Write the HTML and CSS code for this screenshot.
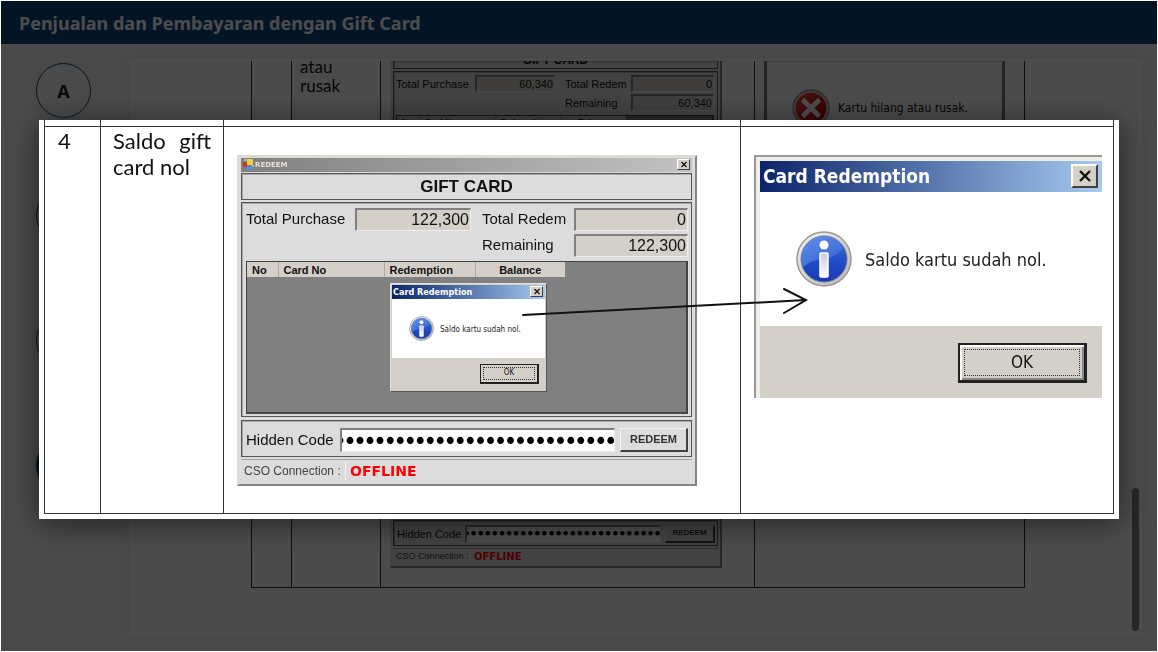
FILE: index.html
```html
<!DOCTYPE html>
<html lang="id">
<head>
<meta charset="utf-8">
<title>Penjualan dan Pembayaran dengan Gift Card</title>
<link rel="stylesheet" href="styles.css">
</head>
<body>
<svg class="defs" width="0" height="0" aria-hidden="true">
  <defs>
    <linearGradient id="ring" x1="0" y1="0" x2="1" y2="1"><stop offset="0" stop-color="#f4f4f4"/><stop offset="1" stop-color="#b4b4b0"/></linearGradient>
    <linearGradient id="blue" x1="0" y1="0" x2="0" y2="1"><stop offset="0" stop-color="#3f74dc"/><stop offset=".5" stop-color="#2350c8"/><stop offset="1" stop-color="#1838b4"/></linearGradient>
    <linearGradient id="gloss" x1="0" y1="0" x2="1" y2="1"><stop offset="0" stop-color="#6f9cf0"/><stop offset="1" stop-color="#3564d2"/></linearGradient>
    <linearGradient id="stem" x1="0" y1="0" x2="0" y2="1"><stop offset="0" stop-color="#c8ccd4"/><stop offset="1" stop-color="#ffffff"/></linearGradient>
    <linearGradient id="red" x1="0" y1="0" x2="1" y2="1"><stop offset="0" stop-color="#ee5040"/><stop offset=".5" stop-color="#d81818"/><stop offset="1" stop-color="#a80000"/></linearGradient>
    <symbol id="info" viewBox="0 0 56 56">
      <circle cx="28" cy="28" r="27" fill="url(#ring)" stroke="#9a9a98" stroke-width="1.5"/>
      <circle cx="28" cy="28" r="23" fill="url(#blue)" stroke="#6e7690" stroke-width="1"/>
      <path d="M6 32A22 22 0 0 1 47 17Q40 27 26 28Q14 29 6 37Z" fill="url(#gloss)" opacity=".75"/>
      <circle cx="28" cy="14" r="4.5" fill="#fff"/>
      <rect x="24" y="22" width="8" height="24" rx="1" fill="url(#stem)" stroke="#fff" stroke-width="1.5"/>
    </symbol>
    <symbol id="error" viewBox="0 0 56 56">
      <circle cx="28" cy="28" r="26" fill="#f4f4f4" stroke="#9a9a98" stroke-width="3"/>
      <circle cx="28" cy="28" r="23" fill="url(#red)"/>
      <path d="M18 18L38 38M38 18L18 38" stroke="#fff" stroke-width="7" stroke-linecap="square"/>
    </symbol>
    <symbol id="close" viewBox="0 0 16 14"><path d="M3 2L13 12M13 2L3 12" stroke="#111" stroke-width="2.4" fill="none"/></symbol>
  </defs>
</svg>

<div class="app">
  <header class="topbar"><h1>Penjualan dan Pembayaran dengan Gift Card</h1></header>
  <div class="workspace">
    <nav class="steps">
      <a class="step" href="#a">A</a>
      <a class="step" href="#b">B</a>
      <a class="step" href="#c">C</a>
      <a class="step step-active" href="#d">D</a>
    </nav>
    <main class="card">
      <table class="cases cases-page">
        <colgroup><col class="p-no"><col class="p-case"><col class="p-shot"><col></colgroup>
        <tbody>
        <tr class="page-first">
          <td></td>
          <td class="case-name"><div>atau<br>rusak</div></td>
          <td class="page-shot">
            <div class="redeem small cut-top">
              <div class="panel banner">GIFT CARD</div>
              <div class="panel totals-panel">
                <div class="totals">
                  <label for="p-buy">Total Purchase</label><input id="p-buy" value="60,340" readonly>
                  <label for="p-red">Total Redem</label><input id="p-red" value="0" readonly>
                  <label class="third" for="p-rem">Remaining</label><input id="p-rem" value="60,340" readonly>
                </div>
                <div class="list"><table><thead><tr><th class="no">No</th><th class="cn">Card No</th><th class="rd">Redemption</th><th class="bl">Balance</th></tr></thead></table></div>
              </div>
            </div>
          </td>
          <td class="page-dialog">
            <div class="message-frame"><svg class="error-icon"><use href="#error"/></svg><span>Kartu hilang atau rusak.</span></div>
          </td>
        </tr>
        <tr class="page-second">
          <td></td><td></td>
          <td class="page-shot">
            <div class="redeem small">
              <div class="panel code-panel">
                <label for="p-code">Hidden Code</label>
                <input id="p-code" type="password" value="1234567890123456789012345678" readonly>
                <button type="button">REDEEM</button>
              </div>
              <div class="status"><span class="conn">CSO Connection :</span><strong>OFFLINE</strong></div>
            </div>
          </td>
          <td></td>
        </tr>
        </tbody>
      </table>
      <div class="scroll-thumb"></div>
    </main>
  </div>
</div>

<div class="backdrop">
  <section class="lightbox" role="dialog" aria-label="Saldo gift card nol">
    <table class="cases cases-zoom">
      <colgroup><col class="z-no"><col class="z-case"><col class="z-shot"><col></colgroup>
      <tbody>
      <tr class="stub"><td></td><td></td><td></td><td></td></tr>
      <tr class="zoom-row">
        <td>4</td>
        <td class="case-text">Saldo gift card nol</td>
        <td class="zoom-shot">
          <div class="redeem">
            <div class="titlebar">
              <svg class="app-icon" viewBox="0 0 11 11"><rect x="4" y="0" width="6" height="6" rx="1" fill="#f5cf45"/><rect x="0" y="3" width="4" height="5" rx="1" fill="#cf3526"/><rect x="4" y="7" width="5" height="4" rx="1" fill="#4a8cea"/><path d="M1 1h3M9 7h2" stroke="#eee"/></svg>
              <span>REDEEM</span>
              <button type="button" class="close" aria-label="Tutup"><svg><use href="#close"/></svg></button>
            </div>
            <div class="panel banner">GIFT CARD</div>
            <div class="panel totals-panel">
              <div class="totals">
                <label for="buy">Total Purchase</label><input id="buy" value="122,300" readonly>
                <label for="red">Total Redem</label><input id="red" value="0" readonly>
                <label class="third" for="rem">Remaining</label><input id="rem" value="122,300" readonly>
              </div>
              <div class="list">
                <table><thead><tr><th class="no">No</th><th class="cn">Card No</th><th class="rd">Redemption</th><th class="bl">Balance</th></tr></thead></table>
                <div class="msgbox msgbox-small">
                  <div class="msg-title"><span>Card Redemption</span><button type="button" class="close" aria-label="Tutup pesan"><svg><use href="#close"/></svg></button></div>
                  <div class="msg-body"><svg><use href="#info"/></svg><span>Saldo kartu sudah nol.</span></div>
                  <div class="msg-foot"><button type="button" class="ok"><span>OK</span></button></div>
                </div>
              </div>
            </div>
            <div class="panel code-panel">
              <label for="code">Hidden Code</label>
              <input id="code" type="password" value="1234567890123456789012345678" readonly>
              <button type="button">REDEEM</button>
            </div>
            <div class="status"><span class="conn">CSO Connection :</span><strong>OFFLINE</strong></div>
          </div>
        </td>
        <td class="zoom-dialog">
          <div class="msgbox msgbox-large">
            <div class="msg-title"><span>Card Redemption</span><button type="button" class="close" aria-label="Tutup dialog"><svg><use href="#close"/></svg></button></div>
            <div class="msg-body"><svg><use href="#info"/></svg><span>Saldo kartu sudah nol.</span></div>
            <div class="msg-foot"><button type="button" class="ok"><span>OK</span></button></div>
          </div>
        </td>
      </tr>
      </tbody>
    </table>
    <svg class="arrow" viewBox="0 0 290 30" aria-hidden="true"><path d="M2 20L285 5M263 -6L285 5L263 18" fill="none" stroke="#111" stroke-width="2" stroke-linecap="round"/></svg>
  </section>
</div>
</body>
</html>
```

FILE: styles.css
```css
* { box-sizing: border-box; }
html, body { height: 100%; }
body {
  margin: 0;
  padding: 1px;
  background: #fff;
  color: #111;
  font-family: "Liberation Sans", Arial, sans-serif;
  overflow: hidden;
}
button, input { font: inherit; color: inherit; margin: 0; padding: 0; border-radius: 0; outline: 0; }
.defs { position: absolute; }

/* page */
.app { height: 100%; display: flex; flex-direction: column; background: #f7f7f7; }
.topbar { flex: none; height: 43px; padding-left: 18px; display: flex; align-items: center; background: #0a4678; }
.topbar h1 { margin: 0; color: #fff; font: bold 18px/24px "Noto Sans", sans-serif; }
.workspace { flex: 1; min-height: 0; display: flex; padding: 13px 13px 13px 35px; }
.steps { flex: none; width: 92px; padding-top: 6px; display: flex; flex-direction: column; gap: 70px; }
.step {
  flex: none; width: 55px; height: 55px; border: 1px solid #0a4678; border-radius: 50%;
  display: flex; align-items: center; justify-content: center;
  color: #222; font: bold 18px/24px "Noto Sans", sans-serif; text-decoration: none;
  box-shadow: 0 2px 8px rgba(0, 0, 0, .1);
}
.step-active { border-width: 3px; }
.card {
  position: relative; flex: 1; padding: 3px 118px 0 122px; overflow: hidden;
  background: #fcfcfc; border: 1px solid #ebebeb; border-radius: 5px; box-shadow: 0 0 10px rgba(0, 0, 0, .06);
}
.scroll-thumb { position: absolute; right: 4px; bottom: 6px; width: 7px; height: 143px; border-radius: 4px; background: #808080; }

/* case tables */
.cases { width: 100%; table-layout: fixed; border-collapse: collapse; font-family: Lato, sans-serif; }
.cases > tbody > tr > td { border: 1px solid #333; padding: 0; vertical-align: top; }
.cases-page > tbody > tr:first-child > td, .stub > td { border-top: 0 !important; }
.p-no { width: 40px; }
.p-case { width: 89px; }
.p-shot { width: 374px; }
.page-first { height: 248px; }
.page-second { height: 278px; }
.case-name > div { margin-top: -4px; padding-left: 8px; font-size: 17px; line-height: 19px; }
.page-first > .page-shot { padding-left: 9px !important; }
.page-second > .page-shot { padding: 0 0 19px 9px !important; vertical-align: bottom !important; }
.page-first > .page-dialog { padding: 0 19px 0 9px !important; }
.message-frame {
  height: 96px; padding-left: 25px; display: flex; align-items: center; gap: 8px;
  border: 3px solid #777; border-top: 1px solid #bbb;
  font: 12px/16px "DejaVu Sans Condensed", "DejaVu Sans", sans-serif;
}
.error-icon { width: 38px; height: 38px; flex: none; }

.z-no { width: 56px; }
.z-case { width: 123px; }
.z-shot { width: 517px; }
.stub { height: 6px; }
.zoom-row { height: 387px; font-size: 22px; line-height: 26px; }
.zoom-row > td:first-child { padding-left: 13px !important; }
.zoom-row > .case-text { padding: 0 12px !important; text-align: justify; }
.zoom-row > .zoom-shot { padding: 28px 43px 0 13px !important; }
.zoom-row > .zoom-dialog { padding: 28px 11px 0 13px !important; }
.zoom-row > td:nth-child(-n+2) { padding-top: 1px !important; }

/* lightbox */
.backdrop {
  position: fixed; inset: 1px; padding: 0 38px 13px; background: rgba(0, 0, 0, .7);
  display: flex; align-items: center;
}
.lightbox { position: relative; flex: 1; padding: 0 5px 5px; background: #fff; box-shadow: 0 4px 28px rgba(0, 0, 0, .55); }
.arrow { position: absolute; left: 482px; top: 175px; width: 290px; height: 30px; overflow: visible; }

/* redeem window */
.redeem {
  height: 331px; padding: 1px 3px 2px 2px; display: flex; flex-direction: column;
  background: #dcdcdc; border: 2px solid #dedbd4; border-right-color: #858585; border-bottom-color: #858585;
  font: 15px/18px "Liberation Sans", Arial, sans-serif;
}
.titlebar {
  height: 14px; flex: none; display: flex; align-items: center; gap: 1px; padding: 0 2px;
  background: linear-gradient(90deg, #808080, #c2c2c2); color: #e4e0d8; font: bold 7px/10px "DejaVu Sans", sans-serif;
}
.app-icon { width: 11px; height: 11px; }
.close {
  display: flex; align-items: center; justify-content: center; margin-left: auto;
  width: 13px; height: 11px; background: #d4d0c8; border: 1px solid #fff; border-right-color: #404040; border-bottom-color: #404040;
}
.close svg { width: 8px; height: 7px; }
.panel { border: 1px solid #555; box-shadow: inset 1px 1px 0 #aaa; }
.banner { flex: none; height: 27px; margin-top: 1px; padding-top: 2px; display: flex; align-items: center; justify-content: center; font-size: 17px; font-weight: bold; }
.totals-panel { flex: 1; margin-top: 2px; padding: 5px 3px 2px 4px; display: flex; flex-direction: column; gap: 4px; }
.totals { display: grid; grid-template-columns: 109px 1fr 103px 114px; row-gap: 3px; align-items: center; }
.totals label:nth-of-type(n+2) { padding-left: 11px; }
.totals .third { grid-column: 3; }
.totals input {
  width: 100%; min-width: 0; height: 23px; padding-right: 1px; text-align: right; font-size: 16px;
  background: #d4d0c8; border: 2px solid #808080; border-right: 1px solid #eee; border-bottom: 1px solid #eee;
}
.list { position: relative; flex: 1; background: #808080; border: 1px solid #444; border-bottom-width: 2px; border-right-width: 2px; }
.list table { border-collapse: collapse; font: bold 11px/14px "Liberation Sans", Arial, sans-serif; }
.list th { height: 14px; padding: 1px 0 0 5px; background: #d4d0c8; text-align: left; border-right: 1px solid #aaa; }
.list .no { width: 31px; }
.list .cn { width: 106px; }
.list .rd { width: 91px; }
.list .bl { width: 90px; padding: 1px 0 0; text-align: center; border-right: 0; }
.code-panel { flex: none; height: 37px; margin-top: 3px; padding: 7px 3px 4px 4px; display: flex; align-items: stretch; }
.code-panel label { width: 94px; align-self: center; white-space: nowrap; }
.code-panel input {
  flex: 1; min-width: 0; padding: 2px 0 0; text-indent: -7px; background: #fff; color: #000;
  border: 2px solid #808080; border-right: 1px solid #eee; border-bottom: 1px solid #eee;
  font: 17px/18px "DejaVu Sans", sans-serif; -webkit-text-stroke: 2px #000;
}
.code-panel button {
  width: 68px; margin-left: 5px; background: #dcdcdc; font-size: 11px; font-weight: bold; color: #333; line-height: 14px;
  border: 1px solid #f4f4f4; border-right: 2px solid #404040; border-bottom: 2px solid #404040;
}
.status { flex: none; height: 23px; margin-top: 2px; display: flex; align-items: center; border-top: 1px solid #a8a49c; }
.conn { width: 105px; padding-left: 3px; border-right: 1px solid #f4f4f4; color: #444; font-size: 12px; white-space: nowrap; }
.status strong { padding-left: 4px; color: #f00; font: bold 14px/18px "DejaVu Sans", sans-serif; }

/* compact redeem window */
.small { width: 332px; height: 239px; padding: 0 2px 2px 1px; font-size: 11px; line-height: 14px; justify-content: flex-end; }
.small.cut-top { height: 215px; border-top: 0; }
.small .banner { height: 20px; font-size: 12px; }
.cut-top .banner { height: 8px; margin-top: 0; border-top: 0; align-items: flex-end; overflow: hidden; line-height: 14px; padding-bottom: 1px; }
.small .totals-panel { padding: 3px 3px 2px 2px; }
.small .totals { grid-template-columns: 79px 1fr 76px 83px; row-gap: 2px; }
.small .totals label:nth-of-type(n+2) { padding-left: 10px; }
.small .totals input { height: 17px; font-size: 11px; }
.small .list th { height: 10px; font-size: 8px; line-height: 10px; }
.small .list .no { width: 22px; }
.small .list .cn { width: 76px; }
.small .list .rd { width: 65px; }
.small .list .bl { width: 66px; }
.small .code-panel { height: 26px; padding: 4px 2px 2px 3px; }
.small .code-panel label { width: 68px; }
.small .code-panel input { padding-top: 1px; text-indent: -4px; font-size: 12px; line-height: 13px; -webkit-text-stroke-width: 1px; }
.small .code-panel button { width: 50px; margin-left: 4px; font-size: 8px; line-height: 10px; }
.small .status { height: 16px; margin-top: 2px; }
.small .conn { width: 77px; font-size: 9px; }
.small .status strong { font-size: 10px; line-height: 13px; }

/* message box */
.msgbox { display: flex; flex-direction: column; background: #fff; font-family: "DejaVu Sans Condensed", "DejaVu Sans", sans-serif; }
.msg-title { flex: none; display: flex; align-items: center; color: #fff; font-weight: bold; background: linear-gradient(90deg, #0a246a, #a6caf0); }
.msg-body { flex: 1; display: flex; align-items: center; color: #222; }
.msg-body svg { flex: none; }
.msg-body span { padding-top: 3px; }
.msg-foot { flex: none; display: flex; align-items: flex-start; justify-content: flex-end; background: #d4d0c8; }
.ok { background: #d4d0c8; border: 1px solid #222; border-right-width: 2px; border-bottom-width: 2px; display: flex; }
.ok span { flex: 1; display: flex; align-items: center; justify-content: center; border: 1px dotted #333; }

.msgbox-small {
  position: absolute; left: 143px; top: 21px; width: 157px; height: 109px; padding: 1px;
  border: 1px solid #e4e0d8; border-right-color: #555; border-bottom-color: #555; background: #d4d0c8;
}
.msgbox-small .msg-title { height: 14px; padding: 0 2px 0 1px; font-size: 9px; line-height: 12px; }
.msgbox-small .msg-body { padding: 0 0 0 17px; gap: 6px; background: #fff; font-size: 8px; line-height: 12px; }
.msgbox-small .msg-body svg { width: 25px; height: 25px; }
.msgbox-small .msg-foot { height: 32px; padding: 6px 6px 0 0; }
.msgbox-small .ok { width: 59px; height: 20px; padding: 2px; font-size: 8px; line-height: 10px; }

.msgbox-large { height: 243px; padding: 4px 0 0 4px; border: 2px solid #999; border-right: 0; border-bottom: 0; background: #f0eee8; }
.msgbox-large .msg-title { height: 31px; padding: 0 4px 0 3px; font-size: 19px; line-height: 26px; }
.msgbox-large .msg-title .close { width: 27px; height: 24px; border-width: 2px; }
.msgbox-large .close svg { width: 16px; height: 14px; }
.msgbox-large .msg-body { padding-left: 36px; gap: 13px; background: #fff; font-size: 18px; line-height: 22px; }
.msgbox-large .msg-body svg { width: 56px; height: 56px; }
.msgbox-large .msg-foot { height: 72px; padding: 17px 15px 0 0; }
.msgbox-large .ok { width: 129px; height: 40px; padding: 4px; font-size: 17px; line-height: 22px; border-width: 2px 3px 3px 2px; box-shadow: inset 2px 2px 0 #fff, inset -2px -2px 0 #888; }
```
